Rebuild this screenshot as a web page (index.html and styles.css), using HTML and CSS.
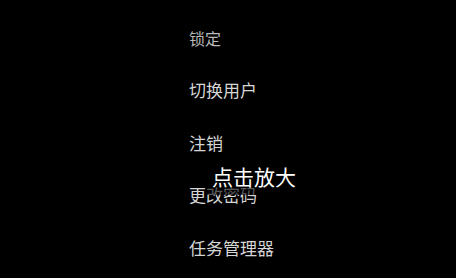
FILE: index.html
```html
<!DOCTYPE html>
<html lang="zh-CN">
<head>
<meta charset="utf-8">
<link rel="stylesheet" href="styles.css">
</head>
<body>
<div class="screen">
  <ul class="menu">
    <li class="item dim">锁定</li>
    <li class="item">切换用户</li>
    <li class="item">注销</li>
    <li class="item">更改密码</li>
    <li class="item">任务管理器</li>
  </ul>
  <div class="zoom-label">点击放大</div>
</div>
</body>
</html>
```
FILE: styles.css
```css
html, body {
  margin: 0;
  padding: 0;
  background: #000;
}
.screen {
  position: relative;
  width: 456px;
  height: 278px;
  background: #000;
  overflow: hidden;
  font-family: "Noto Sans CJK SC", "Noto Sans", sans-serif;
}
.menu {
  list-style: none;
  margin: 0;
  padding: 27.5px 0 0 189px;
  display: flex;
  flex-direction: column;
  gap: 32px;
}
.item {
  font-size: 17px;
  line-height: 20.5px;
  height: 20.5px;
  color: #d6d6d6;
}
.item.dim {
  color: #b8b8b8;
  font-size: 16px;
}
.zoom-label {
  position: absolute;
  left: 205px;
  top: 161px;
  padding: 0 6px 0 7px;
  height: 34px;
  line-height: 30px;
  font-size: 21px;
  color: #fff;
  background: rgba(0, 0, 0, 0.6);
}
```
